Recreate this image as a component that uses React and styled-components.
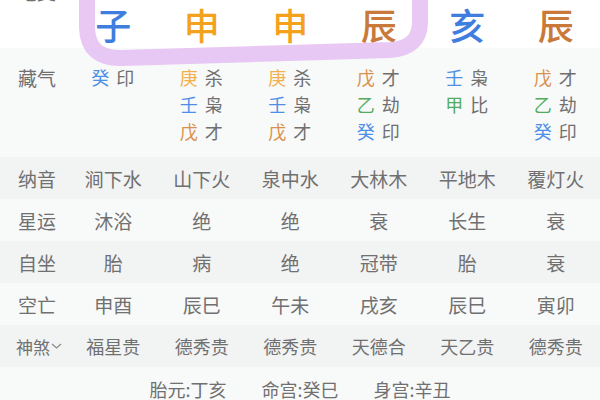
import React from "react";
import styled, { createGlobalStyle } from "styled-components";

const Global = createGlobalStyle`
  html, body { margin: 0; padding: 0; background: #fff; overflow: hidden; }
  body { font-family: "Noto Sans CJK SC", "Noto Sans", sans-serif; }
`;

const Page = styled.div`
  position: relative;
  width: 600px;
  height: 400px;
  overflow: hidden;
`;

const Table = styled.div`
  margin-top: -16px;
  display: flex;
  flex-direction: column;
`;

const Row = styled.div`
  display: grid;
  grid-template-columns: 69px repeat(6, 1fr);
  align-items: ${(p) => (p.$top ? "start" : "center")};
  height: ${(p) => p.$h || 42}px;
  background: ${(p) => p.$bg || "#fff"};
  box-sizing: border-box;
  padding-top: ${(p) => p.$pt || 0}px;
`;

const Label = styled.div`
  padding-left: ${(p) => p.$pl ?? 18}px;
  margin-top: ${(p) => p.$mt || 0}px;
  font-size: ${(p) => p.$fs || 19}px;
  color: #707070;
  line-height: ${(p) => p.$lh || 27}px;
  display: flex;
  align-items: center;
  gap: 1px;
  white-space: nowrap;
`;

const Branch = styled.div`
  text-align: center;
  font-size: 36px;
  font-weight: 500;
  line-height: 48px;
  color: ${(p) => p.$c};
  padding-top: 16px;
`;

const Cell = styled.div`
  text-align: center;
  font-size: ${(p) => p.$fs || 19}px;
  color: #707070;
  white-space: nowrap;
`;

const Hidden = styled.div`
  display: flex;
  flex-direction: column;
  align-items: center;
`;

const HLine = styled.div`
  display: flex;
  gap: 7px;
  font-size: 18px;
  line-height: 27px;
  width: 44px;
`;

const Stem = styled.span`
  color: ${(p) => p.$c};
`;

const God = styled.span`
  color: #707070;
`;

const Footer = styled.div`
  height: 42px;
  background: #f8f9f9;
  display: flex;
  justify-content: center;
  align-items: center;
  gap: 35px;
  font-size: 18px;
  color: #707070;
  padding-top: 2px;
  box-sizing: border-box;
`;

const Overlay = styled.svg`
  position: absolute;
  left: 0;
  top: 0;
  pointer-events: none;
`;

const C = {
  blue: "#3f7ddf",
  orange: "#f4a21e",
  brown: "#c97a3a",
  hblue: "#4d8fe6",
  hyellow: "#f2b04c",
  hbrown: "#d8924e",
  green: "#52ad5c",
};

const branches = [
  ["子", C.blue],
  ["申", C.orange],
  ["申", C.orange],
  ["辰", C.brown],
  ["亥", C.blue],
  ["辰", C.brown],
];

const hidden = [
  [["癸", C.hblue, "印"]],
  [["庚", C.hyellow, "杀"], ["壬", C.hblue, "枭"], ["戊", C.hbrown, "才"]],
  [["庚", C.hyellow, "杀"], ["壬", C.hblue, "枭"], ["戊", C.hbrown, "才"]],
  [["戊", C.hbrown, "才"], ["乙", C.green, "劫"], ["癸", C.hblue, "印"]],
  [["壬", C.hblue, "枭"], ["甲", C.green, "比"]],
  [["戊", C.hbrown, "才"], ["乙", C.green, "劫"], ["癸", C.hblue, "印"]],
];

const rows = [
  ["纳音", ["涧下水", "山下火", "泉中水", "大林木", "平地木", "覆灯火"], "#f2f3f3"],
  ["星运", ["沐浴", "绝", "绝", "衰", "长生", "衰"], "#f8f9f9"],
  ["自坐", ["胎", "病", "绝", "冠带", "胎", "衰"], "#f2f3f3"],
  ["空亡", ["申酉", "辰巳", "午未", "戌亥", "辰巳", "寅卯"], "#f8f9f9"],
];

const shensha = ["福星贵", "德秀贵", "德秀贵", "天德合", "天乙贵", "德秀贵"];

export default function App() {
  return (
    <>
      <Global />
      <Page>
        <Table>
          <Row $h={64} $top>
            <Label $mt={-6}>地支</Label>
            {branches.map(([b, c], i) => (
              <Branch key={i} $c={c}>{b}</Branch>
            ))}
          </Row>
          <Row $h={109} $top $bg="#f8f9f9" $pt={16}>
            <Label>藏气</Label>
            {hidden.map((col, i) => (
              <Hidden key={i}>
                {col.map(([s, c, g], j) => (
                  <HLine key={j}>
                    <Stem $c={c}>{s}</Stem>
                    <God>{g}</God>
                  </HLine>
                ))}
              </Hidden>
            ))}
          </Row>
          {rows.map(([label, cells, bg]) => (
            <Row key={label} $bg={bg}>
              <Label>{label}</Label>
              {cells.map((t, i) => (
                <Cell key={i}>{t}</Cell>
              ))}
            </Row>
          ))}
          <Row $bg="#f2f3f3">
            <Label $fs={17} $pl={16}>
              神煞
              <svg width="11" height="8" viewBox="0 0 11 8">
                <path d="M1 2 L5.5 6 L10 2" fill="none" stroke="#8a8a8a" strokeWidth="1.2" />
              </svg>
            </Label>
            {shensha.map((t, i) => (
              <Cell key={i} $fs={18}>{t}</Cell>
            ))}
          </Row>
          <Footer>
            <span>胎元:丁亥</span>
            <span>命宫:癸巳</span>
            <span>身宫:辛丑</span>
          </Footer>
        </Table>
        <Overlay width="600" height="400" viewBox="0 0 600 400">
          <path
            d="M87 -5 L87 28 Q88 59 122 58 L390 50 Q420 48 420 22 L420 -5"
            fill="none"
            stroke="#e2b6f0"
            strokeOpacity="0.75"
            strokeWidth="16"
            strokeLinecap="round"
            strokeLinejoin="round"
          />
        </Overlay>
      </Page>
    </>
  );
}
